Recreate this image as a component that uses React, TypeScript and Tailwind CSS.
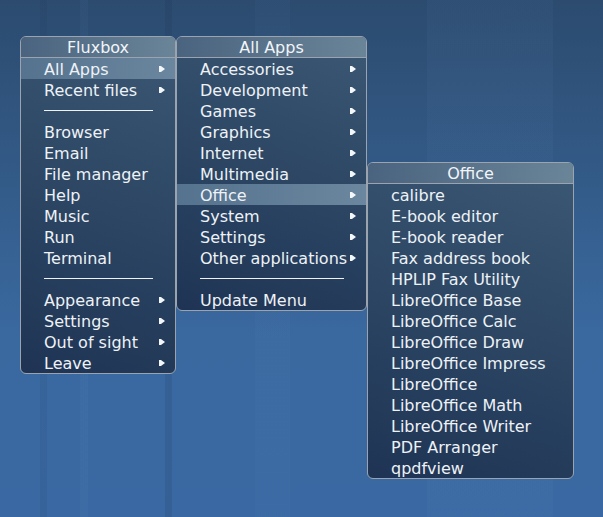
import React from "react";

type Item = { label: string; sub?: boolean; sep?: boolean; active?: boolean };

const rootItems: Item[] = [
  { label: "All Apps", sub: true, active: true },
  { label: "Recent files", sub: true },
  { label: "", sep: true },
  { label: "Browser" },
  { label: "Email" },
  { label: "File manager" },
  { label: "Help" },
  { label: "Music" },
  { label: "Run" },
  { label: "Terminal" },
  { label: "", sep: true },
  { label: "Appearance", sub: true },
  { label: "Settings", sub: true },
  { label: "Out of sight", sub: true },
  { label: "Leave", sub: true },
];

const appItems: Item[] = [
  { label: "Accessories", sub: true },
  { label: "Development", sub: true },
  { label: "Games", sub: true },
  { label: "Graphics", sub: true },
  { label: "Internet", sub: true },
  { label: "Multimedia", sub: true },
  { label: "Office", sub: true, active: true },
  { label: "System", sub: true },
  { label: "Settings", sub: true },
  { label: "Other applications", sub: true },
  { label: "", sep: true },
  { label: "Update Menu" },
];

const officeItems: Item[] = [
  "calibre",
  "E-book editor",
  "E-book reader",
  "Fax address book",
  "HPLIP Fax Utility",
  "LibreOffice Base",
  "LibreOffice Calc",
  "LibreOffice Draw",
  "LibreOffice Impress",
  "LibreOffice",
  "LibreOffice Math",
  "LibreOffice Writer",
  "PDF Arranger",
  "qpdfview",
].map((label) => ({ label }));

function Arrow() {
  return (
    <svg width="6" height="6" viewBox="0 0 6 6" className="shrink-0 -mt-px">
      <polygon points="0,0 2,0 6,3 2,6 0,6" fill="#f4f7fa" />
    </svg>
  );
}

function Menu({ title, items, className }: { title: string; items: Item[]; className: string }) {
  return (
    <div
      className={`absolute flex flex-col overflow-hidden rounded-[6px] border border-[#9ba4ae] bg-[linear-gradient(20deg,#1f3454_0%,#2c4664_50%,#3b5874_100%)] ${className}`}
    >
      <div className="h-[21px] pt-[2px] flex items-center justify-center border-b border-[#9ba4ae] bg-[linear-gradient(90deg,#4a6480,#6a8498)] text-[16px] leading-none text-[#f2f5f8]">
        {title}
      </div>
      {items.map((it, i) =>
        it.sep ? (
          <div key={i} className="h-[21px] flex items-center pl-[23px] pr-[22px]">
            <div className="h-px w-full bg-[#eef2f6]" />
          </div>
        ) : (
          <div
            key={i}
            className={`h-[21px] pt-[2px] flex items-center justify-between pl-[23px] pr-[10px] text-[16px] leading-none text-[#eef2f6] ${
              it.active ? "bg-[linear-gradient(90deg,#55728e,#6b879f)]" : ""
            }`}
          >
            <span>{it.label}</span>
            {it.sub && <Arrow />}
          </div>
        )
      )}
    </div>
  );
}

export default function App() {
  return (
    <div
      className="relative w-[603px] h-[517px] overflow-hidden bg-[linear-gradient(180deg,#2c4b6f_0%,#335b88_35%,#3a69a0_65%,#3a68a2_100%)]"
      style={{ fontFamily: '"DejaVu Sans", sans-serif' }}
    >
      <div className="absolute inset-0 bg-[linear-gradient(90deg,transparent_0px,transparent_40px,rgba(20,40,70,0.08)_40px,rgba(20,40,70,0.08)_47px,transparent_47px,transparent_80px,rgba(120,160,210,0.05)_80px,rgba(120,160,210,0.05)_88px,transparent_88px,transparent_165px,rgba(20,40,70,0.13)_165px,rgba(20,40,70,0.13)_172px,transparent_172px,transparent_255px,rgba(120,160,210,0.04)_255px,rgba(120,160,210,0.04)_290px,transparent_290px,transparent_427px,rgba(120,160,210,0.05)_427px,rgba(120,160,210,0.05)_553px,transparent_553px)]" />
      <Menu title="Fluxbox" items={rootItems} className="left-[20px] top-[36px] w-[156px]" />
      <Menu title="All Apps" items={appItems} className="left-[176px] top-[36px] w-[191px]" />
      <Menu title="Office" items={officeItems} className="left-[367px] top-[162px] w-[207px]" />
    </div>
  );
}
